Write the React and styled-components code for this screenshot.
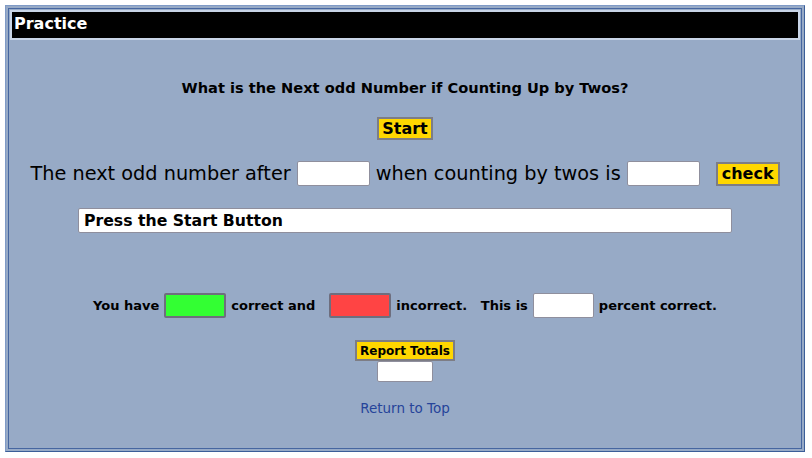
import styled, { createGlobalStyle } from "styled-components"

const GlobalStyle = createGlobalStyle`
    body {
        margin: 0;
        background: #ffffff;
        font-family: "DejaVu Sans", Verdana, sans-serif;
    }
`

const Frame = styled.div`
    margin: 5px;
    width: 800px;
    height: 447px;
    box-sizing: border-box;
    padding: 2px;
    background: #97aac6;
    border: 1px solid;
    border-color: #7f9ac6 #3b5e98 #3b5e98 #7f9ac6;
`

const Panel = styled.div`
    height: 100%;
    box-sizing: border-box;
    border: 1px solid #4666a0;
    padding: 1px;
    display: flex;
    flex-direction: column;
    align-items: center;
`

const TitleBar = styled.div`
    align-self: stretch;
    height: 26px;
    line-height: 24px;
    background: #000;
    border: 2px solid #c9d5e7;
    color: #fff;
    font-size: 16px;
    font-weight: bold;
    padding-left: 2px;
`

const Heading = styled.div`
    margin-top: 39px;
    font-size: 14.6px;
    line-height: 17px;
    font-weight: bold;
    color: #000;
`

const YellowButton = styled.button`
    margin-top: ${p => p.$top || 0}px;
    height: ${p => p.$h}px;
    padding: 0 ${p => p.$pad || 3}px;
    box-sizing: border-box;
    background: #ffd700;
    border: 2px solid #7d7d85;
    color: #000;
    font-family: "DejaVu Sans", Verdana, sans-serif;
    font-size: ${p => p.$size}px;
    font-weight: bold;
    line-height: 1;
    cursor: pointer;
`

const Sentence = styled.div`
    margin-top: 21px;
    display: flex;
    align-items: center;
    font-size: 19.3px;
    color: #000;
`

const Field = styled.input`
    width: ${p => p.$w}px;
    height: ${p => p.$h || 25}px;
    box-sizing: border-box;
    margin: 0 ${p => p.$gap ?? 6}px;
    padding: 0 4px;
    background: ${p => p.$bg || "#fff"};
    border: ${p => p.$thick ? 2 : 1}px solid ${p => p.$thick ? "#6e6e7e" : "#8f8f9d"};
    border-radius: 2px;
    font-family: "DejaVu Sans", Verdana, sans-serif;
    font-size: 15px;
    font-weight: bold;
    color: #000;
    outline: none;
`

const Message = styled(Field)`
    margin: 22px 0 0;
    font-size: 15.7px;
    padding: 0 5px;
`

const Counts = styled.div`
    margin-top: 60px;
    display: flex;
    align-items: center;
    font-size: 13px;
    font-weight: bold;
    color: #000;
`

const Totals = styled.div`
    margin-top: 22px;
    display: flex;
    flex-direction: column;
    align-items: center;
`

const TopLink = styled.a`
    margin-top: 18px;
    font-size: 13.5px;
    color: #26449a;
    text-decoration: none;
`

export default function App() {
    return (
        <>
            <GlobalStyle />
            <Frame>
                <Panel>
                    <TitleBar>Practice</TitleBar>
                    <Heading>What is the Next odd Number if Counting Up by Twos?</Heading>
                    <YellowButton $top={21} $h={23} $size={16}>Start</YellowButton>
                    <Sentence>
                        The next odd number after
                        <Field $w={73} readOnly />
                        when counting by twos is
                        <Field $w={73} readOnly style={{ marginRight: 16 }} />
                        <YellowButton $h={24} $size={16} $pad={4}>check</YellowButton>
                    </Sentence>
                    <Message $w={654} readOnly value="Press the Start Button" />
                    <Counts>
                        You have
                        <Field $w={62} $thick $bg="#33ff33" $gap={5} readOnly />
                        correct and&nbsp;&nbsp;
                        <Field $w={62} $thick $bg="#ff4444" $gap={5} readOnly />
                        incorrect.&nbsp;&nbsp; This is
                        <Field $w={61} $gap={5} readOnly />
                        percent correct.
                    </Counts>
                    <Totals>
                        <YellowButton $h={21} $size={12}>Report Totals</YellowButton>
                        <Field $w={56} $h={21} $gap={0} readOnly />
                    </Totals>
                    <TopLink href="#top">Return to Top</TopLink>
                </Panel>
            </Frame>
        </>
    )
}
